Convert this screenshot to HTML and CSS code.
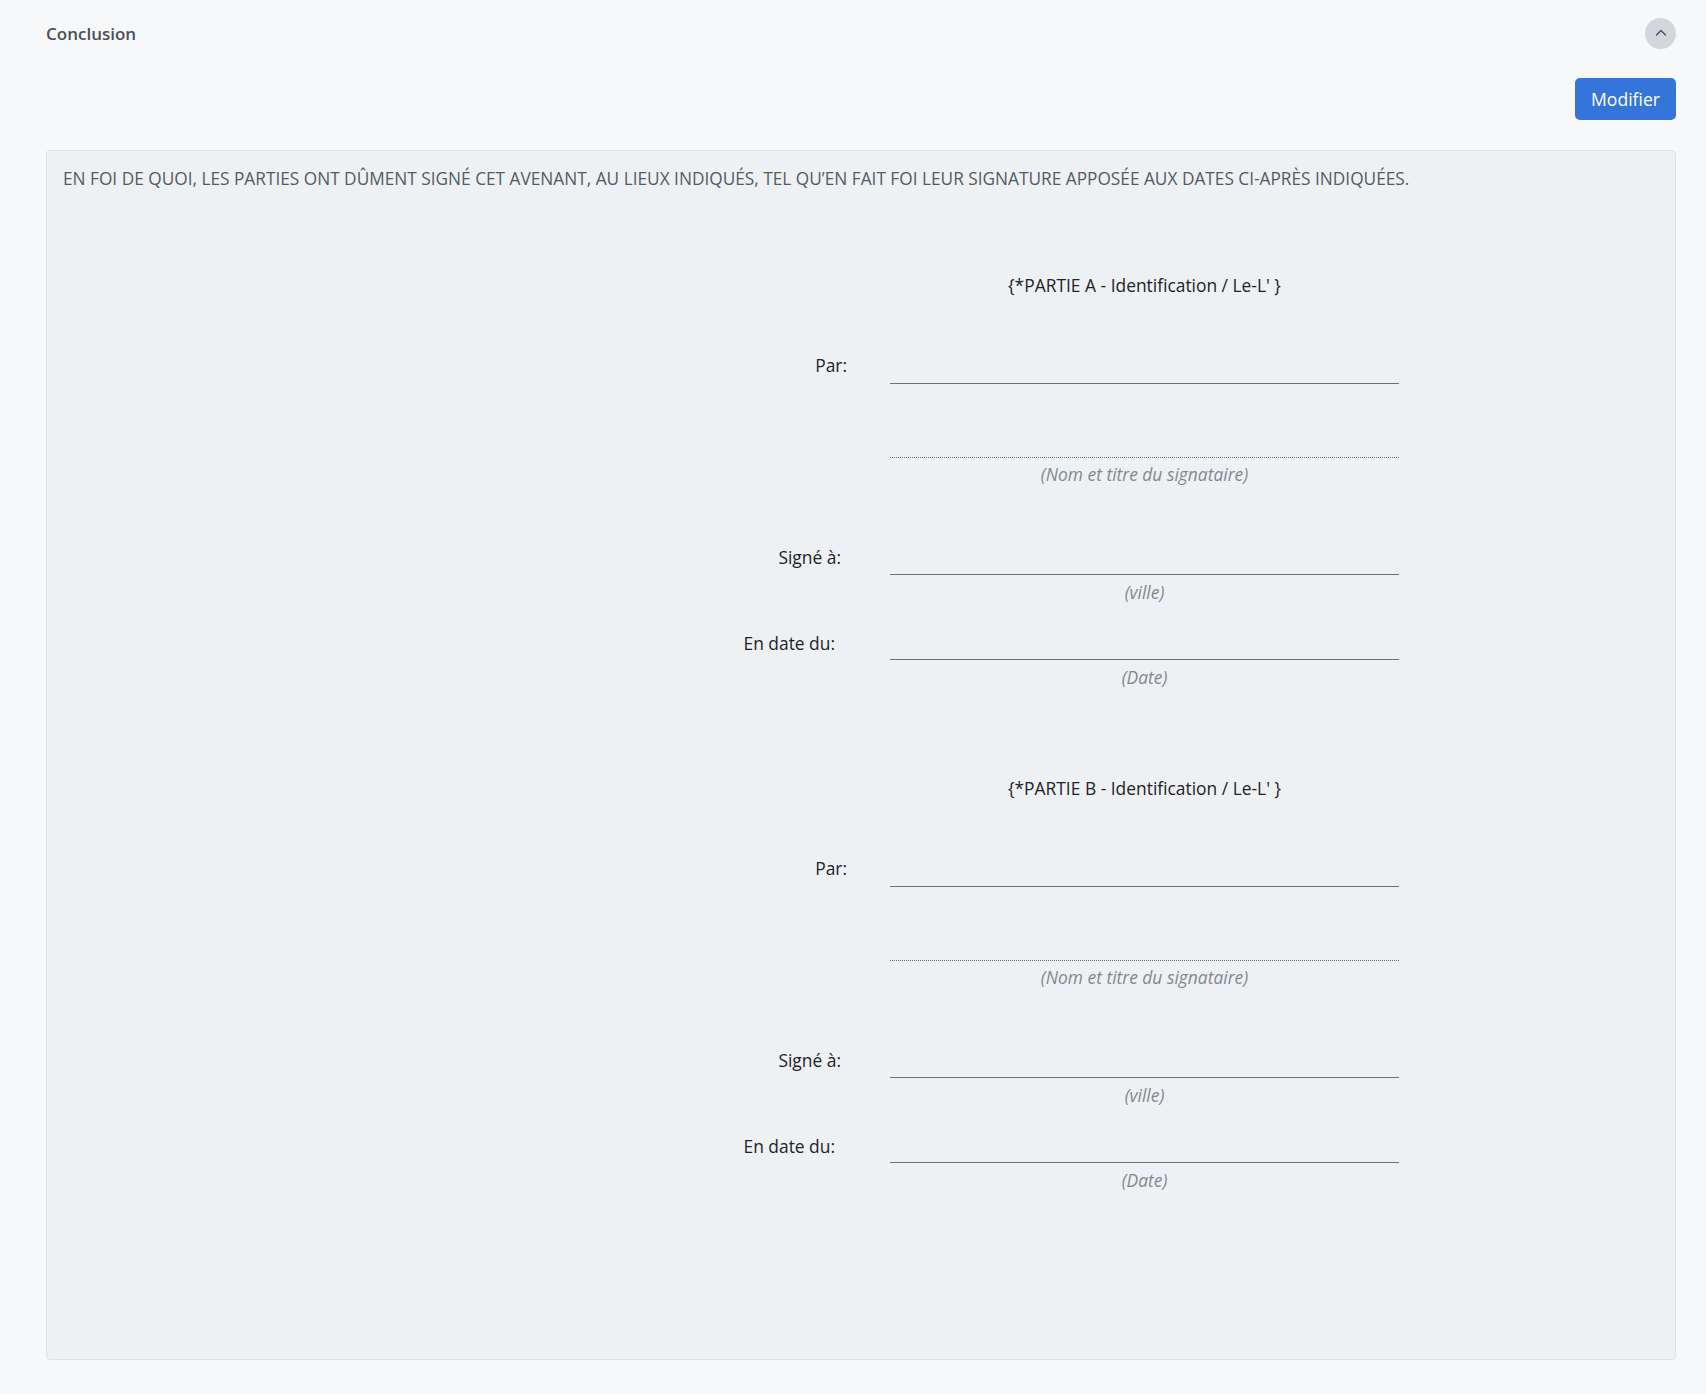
FILE: index.html
```html
<!DOCTYPE html>
<html lang="fr">
<head>
<meta charset="utf-8">
<title>Conclusion</title>
<link rel="stylesheet" href="styles.css">
</head>
<body>
<div class="page">
  <header class="section-head">
    <h2 class="section-title">Conclusion</h2>
    <button class="collapse-btn" aria-label="Réduire">
      <svg width="14" height="14" viewBox="0 0 14 14"><path d="M2.5 9 L7 4.5 L11.5 9" fill="none" stroke="#4b5058" stroke-width="1.4" stroke-linecap="round" stroke-linejoin="round"/></svg>
    </button>
  </header>
  <div class="actions">
    <button class="btn-primary">Modifier</button>
  </div>
  <section class="panel">
    <p class="intro">EN FOI DE QUOI, LES PARTIES ONT DÛMENT SIGNÉ CET AVENANT, AU LIEUX INDIQUÉS, TEL QU’EN FAIT FOI LEUR SIGNATURE APPOSÉE AUX DATES CI-APRÈS INDIQUÉES.</p>

    <div class="sig-block">
      <div class="sig-title">{*PARTIE A - Identification / Le-L' }</div>
      <div class="row row-par">
        <div class="label">Par:</div>
        <div class="field"></div>
      </div>
      <div class="row row-name">
        <div class="label"></div>
        <div class="field field-dotted"></div>
      </div>
      <div class="caption-row"><div class="caption">(Nom et titre du signataire)</div></div>
      <div class="row row-city">
        <div class="label">Signé à:</div>
        <div class="field"></div>
      </div>
      <div class="caption-row"><div class="caption caption-gap">(ville)</div></div>
      <div class="row row-date">
        <div class="label label-date">En date du:</div>
        <div class="field"></div>
      </div>
      <div class="caption-row"><div class="caption caption-gap">(Date)</div></div>
    </div>

    <div class="sig-block sig-block-b">
      <div class="sig-title">{*PARTIE B - Identification / Le-L' }</div>
      <div class="row row-par">
        <div class="label">Par:</div>
        <div class="field"></div>
      </div>
      <div class="row row-name">
        <div class="label"></div>
        <div class="field field-dotted"></div>
      </div>
      <div class="caption-row"><div class="caption">(Nom et titre du signataire)</div></div>
      <div class="row row-city">
        <div class="label">Signé à:</div>
        <div class="field"></div>
      </div>
      <div class="caption-row"><div class="caption caption-gap">(ville)</div></div>
      <div class="row row-date">
        <div class="label label-date">En date du:</div>
        <div class="field"></div>
      </div>
      <div class="caption-row"><div class="caption caption-gap">(Date)</div></div>
    </div>
  </section>
</div>
</body>
</html>
```
FILE: styles.css
```css
* { box-sizing: border-box; }
html, body { margin: 0; padding: 0; }
body {
  background: #f7f8fa;
  font-family: "Open Sans", "Noto Sans", "Liberation Sans", sans-serif;
  color: #222;
}
.page {
  padding: 0 30px 35px 46px;
}
.section-head {
  height: 66px;
  display: flex;
  align-items: center;
  justify-content: space-between;
}
.section-title {
  margin: 0;
  font-size: 17px;
  font-weight: 600;
  color: #4b5058;
}
.collapse-btn {
  width: 31px;
  height: 31px;
  border-radius: 50%;
  border: none;
  background: #d3d6db;
  padding: 0;
  display: flex;
  align-items: center;
  justify-content: center;
}
.actions {
  display: flex;
  justify-content: flex-end;
  padding-top: 12px;
}
.btn-primary {
  height: 42px;
  width: 101px;
  border: none;
  border-radius: 5px;
  background: #3574d9;
  color: #fff;
  font-family: inherit;
  font-size: 17.6px;
  font-weight: 500;
  padding: 0;
}
.panel {
  margin-top: 30px;
  background: #eef1f4;
  border: 1px solid #dfe3e8;
  border-radius: 4px;
  padding: 16px 16px 168px 16px;
}
.intro {
  margin: 0;
  font-size: 17.25px;
  line-height: 24px;
  color: #555a61;
}
.sig-block {
  margin-top: 82px;
  margin-left: 582px;
  width: 754px;
}
.sig-block-b { margin-top: 88px; }
.sig-title {
  margin-left: 245px;
  width: 509px;
  text-align: center;
  font-size: 17.4px;
  line-height: 24px;
  color: #1f2227;
}
.row {
  display: flex;
  align-items: flex-end;
}
.label {
  width: 200px;
  margin-right: 45px;
  text-align: right;
  font-size: 17.4px;
  line-height: 24px;
  color: #1f2227;
  margin-bottom: 5px;
}
.row-par .label { margin-right: 43px; width: 202px; margin-bottom: 7px; }
.row-city .label { margin-bottom: 6px; padding-right: 4px; }
.label-date { margin-bottom: 5px; padding-right: 10px; }
.field {
  width: 509px;
  height: 32px;
  border-bottom: 1px solid #6d7177;
}
.row-par { margin-top: 55px; }
.row-name .field {
  height: 74px;
}
.field-dotted {
  border-bottom: 1px dotted #6d7177;
}
.row-city { margin-top: 58px; }
.row-date { margin-top: 25px; }
.caption-row {
  margin-left: 245px;
  width: 509px;
}
.caption {
  text-align: center;
  font-size: 17.4px;
  line-height: 22px;
  font-style: italic;
  color: #83888f;
  margin-top: 5px;
}
.caption-gap { margin-top: 6px; }
```
